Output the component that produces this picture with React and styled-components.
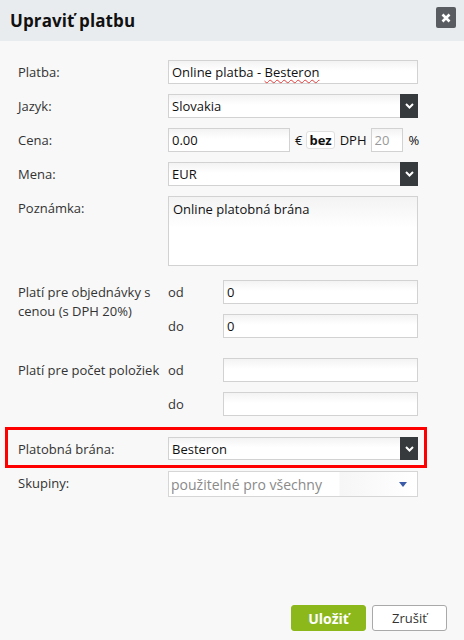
import React from "react";
import styled, { createGlobalStyle } from "styled-components";

const GlobalStyle = createGlobalStyle`
  html, body {
    margin: 0;
    padding: 0;
    background: #f8f8f8;
  }
  body {
    font-family: "Open Sans", "Liberation Sans", sans-serif;
    font-size: 13px;
    color: #333;
  }
  * {
    box-sizing: border-box;
  }
`;

const Dialog = styled.div`
  width: 464px;
  height: 640px;
  display: flex;
  flex-direction: column;
  background: #f8f8f8;
`;

const Header = styled.div`
  height: 41px;
  flex: none;
  display: flex;
  align-items: center;
  justify-content: space-between;
  padding: 0 8px 0 10px;
  background: #e9ecef;
`;

const Title = styled.h1`
  margin: 0;
  font-size: 17px;
  font-weight: 700;
  color: #111;
  letter-spacing: 0.1px;
`;

const CloseButton = styled.button`
  width: 20px;
  height: 21px;
  padding: 0;
  border: 0;
  border-radius: 2px;
  background: #595d61;
  display: flex;
  align-items: center;
  justify-content: center;
  margin-top: -6px;
`;

const Body = styled.div`
  padding: 19px 0 0 18px;
`;

const Row = styled.div`
  display: grid;
  grid-template-columns: 150px 250px;
  align-items: start;
  margin-top: ${(p) => p.$top ?? 0}px;
  margin-bottom: ${(p) => p.$gap ?? 10}px;
`;

const Label = styled.div`
  padding-top: 3px;
  line-height: 19px;
  color: #333;
  padding-right: 4px;
`;

const boxBase = `
  height: 24px;
  border: 1px solid #d2d2d2;
  background: linear-gradient(#f3f3f3, #ffffff 45%);
  font-family: "Open Sans", "Liberation Sans", sans-serif;
  font-size: 13px;
  color: #111;
  padding: 0 3px;
`;

const Input = styled.input`
  ${boxBase}
  width: ${(p) => p.$w ?? 250}px;
  color: ${(p) => (p.$muted ? "#999" : "#111")};
  outline: none;
`;

const FakeInput = styled.div`
  ${boxBase}
  width: 250px;
  display: flex;
  align-items: center;
  white-space: pre;
`;

const Misspelled = styled.span`
  text-decoration: underline wavy #e23b3b;
  text-decoration-thickness: 1px;
  text-underline-offset: 2px;
`;

const TextArea = styled.textarea`
  ${boxBase}
  width: 250px;
  height: 70px;
  padding: 3px 4px;
  resize: none;
  line-height: 18px;
  outline: none;
`;

const SelectBox = styled.div`
  ${boxBase}
  width: 250px;
  height: ${(p) => p.$h ?? 24}px;
  display: flex;
  align-items: center;
  padding: 0 0 0 3px;
`;

const SelectValue = styled.span`
  flex: 1;
`;

const ArrowBlock = styled.span`
  width: 18px;
  align-self: stretch;
  margin: -1px -1px -1px 0;
  background: #363a3d;
  display: flex;
  align-items: center;
  justify-content: center;
`;

const PlainSelect = styled.div`
  width: 250px;
  height: 26px;
  border: 1px solid #d6d6d6;
  background: linear-gradient(90deg, #fff 170px, #f6f6f6 171px, #fff);
  display: flex;
  align-items: center;
  padding: 0 10px 0 2px;
`;

const Placeholder = styled.span`
  flex: 1;
  font-size: 14px;
  color: #8a8a8a;
`;

const PriceLine = styled.div`
  display: flex;
  align-items: center;
  height: 24px;
`;

const Unit = styled.span`
  margin: 0 ${(p) => p.$r ?? 5}px 0 ${(p) => p.$l ?? 5}px;
  color: #111;
`;

const TaxToggle = styled.span`
  height: 18px;
  padding: 0 2px;
  border: 1px solid #e0e0e0;
  border-radius: 3px;
  background: #fff;
  font-weight: 700;
  display: flex;
  align-items: center;
  color: #111;
`;

const RangeGrid = styled.div`
  display: grid;
  grid-template-columns: 55px 195px;
  row-gap: 10px;
  align-items: center;
`;

const RangeLabel = styled.span`
  color: #333;
`;

const Highlight = styled.div`
  margin: 0 37px 0 -13px;
  padding: 7px 0 5px 10px;
  border: 3px solid #f00;
`;

const Footer = styled.div`
  margin-top: auto;
  display: flex;
  justify-content: flex-end;
  gap: 6px;
  padding: 0 17px 9px 0;
`;

const Button = styled.button`
  width: 75px;
  height: 26px;
  border-radius: 3px;
  font-family: "Open Sans", "Liberation Sans", sans-serif;
  font-size: ${(p) => (p.$primary ? 14 : 13)}px;
  font-weight: ${(p) => (p.$primary ? 700 : 400)};
  color: ${(p) => (p.$primary ? "#fff" : "#333")};
  background: ${(p) => (p.$primary ? "#8db81c" : "#fff")};
  border: 1px solid ${(p) => (p.$primary ? "#8db81c" : "#a9a9a9")};
  padding: 0;
`;

const Chevron = () => (
  <svg width="9" height="6" viewBox="0 0 9 6">
    <path d="M1 1 L4.5 4.5 L8 1" stroke="#fff" strokeWidth="2" fill="none" />
  </svg>
);

const Triangle = () => (
  <svg width="8" height="5" viewBox="0 0 8 5">
    <path d="M0 0 H8 L4 5 Z" fill="#3b5ba8" />
  </svg>
);

const Select = ({ value, h }) => (
  <SelectBox $h={h}>
    <SelectValue>{value}</SelectValue>
    <ArrowBlock>
      <Chevron />
    </ArrowBlock>
  </SelectBox>
);

export default function App() {
  return (
    <>
      <GlobalStyle />
      <Dialog>
        <Header>
          <Title>Upraviť platbu</Title>
          <CloseButton aria-label="close">
            <svg width="10" height="10" viewBox="0 0 10 10">
              <path d="M1.5 1.5 L8.5 8.5 M8.5 1.5 L1.5 8.5" stroke="#fff" strokeWidth="2.6" />
            </svg>
          </CloseButton>
        </Header>

        <Body>
          <Row>
            <Label>Platba:</Label>
            <FakeInput>
              {"Online platba - "}
              <Misspelled>Besteron</Misspelled>
            </FakeInput>
          </Row>
          <Row>
            <Label>Jazyk:</Label>
            <Select value="Slovakia" />
          </Row>
          <Row>
            <Label>Cena:</Label>
            <PriceLine>
              <Input $w={122} defaultValue="0.00" />
              <Unit $l={5} $r={4}>€</Unit>
              <TaxToggle>bez</TaxToggle>
              <Unit $l={5} $r={4}>DPH</Unit>
              <Input $w={32} $muted defaultValue="20" />
              <Unit $l={6}>%</Unit>
            </PriceLine>
          </Row>
          <Row>
            <Label>Mena:</Label>
            <Select value="EUR" />
          </Row>
          <Row $gap={14}>
            <Label>Poznámka:</Label>
            <TextArea defaultValue="Online platobná brána" />
          </Row>
          <Row $gap={20}>
            <Label>Platí pre objednávky s cenou (s DPH 20%)</Label>
            <RangeGrid>
              <RangeLabel>od</RangeLabel>
              <Input $w={195} defaultValue="0" />
              <RangeLabel>do</RangeLabel>
              <Input $w={195} defaultValue="0" />
            </RangeGrid>
          </Row>
          <Row $gap={11}>
            <Label>Platí pre počet položiek</Label>
            <RangeGrid>
              <RangeLabel>od</RangeLabel>
              <Input $w={195} />
              <RangeLabel>do</RangeLabel>
              <Input $w={195} />
            </RangeGrid>
          </Row>
          <Highlight>
            <Row $gap={0}>
              <Label>Platobná brána:</Label>
              <Select value="Besteron" h={23} />
            </Row>
          </Highlight>
          <Row $gap={0} $top={3}>
            <Label>Skupiny:</Label>
            <PlainSelect>
              <Placeholder>použitelné pro všechny</Placeholder>
              <Triangle />
            </PlainSelect>
          </Row>
        </Body>

        <Footer>
          <Button $primary>Uložiť</Button>
          <Button>Zrušiť</Button>
        </Footer>
      </Dialog>
    </>
  );
}
